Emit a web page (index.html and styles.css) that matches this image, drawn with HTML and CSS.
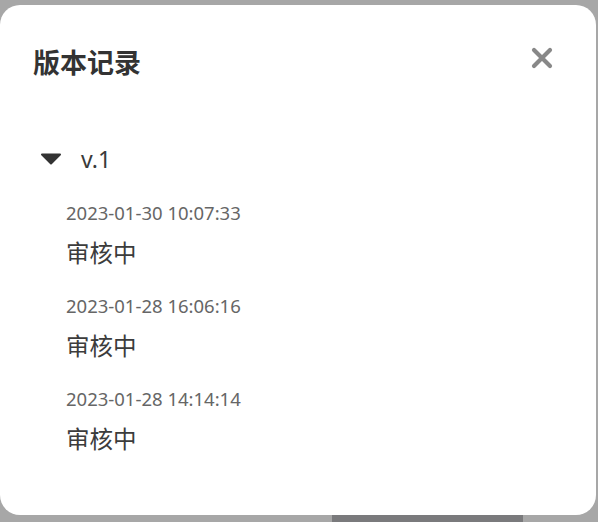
FILE: index.html
```html
<!DOCTYPE html>
<html lang="zh-CN">
<head>
<meta charset="utf-8">
<title>版本记录</title>
<link rel="stylesheet" href="styles.css">
</head>
<body>
<div class="page">
  <div class="dialog">
    <div class="header">
      <h2 class="title">版本记录</h2>
      <button class="close" aria-label="关闭">
        <svg width="22" height="22" viewBox="0 0 22 22"><path d="M3 3 L19 19 M19 3 L3 19" stroke="#888" stroke-width="4.2" stroke-linecap="round"/></svg>
      </button>
    </div>
    <div class="version">
      <div class="version-head">
        <svg class="caret" width="22" height="12" viewBox="0 0 22 12"><path d="M2 1.5 H20 L11 10.5 Z" fill="#333" stroke="#333" stroke-width="2" stroke-linejoin="round"/></svg>
        <span class="version-name">v.1</span>
      </div>
      <ul class="records">
        <li class="record"><div class="time">2023-01-30 10:07:33</div><div class="status">审核中</div></li>
        <li class="record"><div class="time">2023-01-28 16:06:16</div><div class="status">审核中</div></li>
        <li class="record"><div class="time">2023-01-28 14:14:14</div><div class="status">审核中</div></li>
      </ul>
    </div>
  </div>
  <div class="under"><div class="under-bar"></div></div>
</div>
</body>
</html>
```
FILE: styles.css
```css
html, body {
  margin: 0;
  padding: 0;
}
body {
  background: #a7a7a7;
  width: 598px;
  height: 522px;
  overflow: hidden;
  font-family: "Noto Sans", "Noto Sans CJK SC", sans-serif;
}
.page {
  padding-top: 5px;
}
.dialog {
  width: 596px;
  height: 510px;
  box-sizing: border-box;
  background: #fff;
  border-radius: 20px;
  padding: 0 33px 0 33px;
}
.header {
  display: flex;
  justify-content: space-between;
  align-items: center;
  padding-top: 38px;
  height: 38px;
}
.title {
  margin: 0;
  font-family: "Noto Sans CJK SC", sans-serif;
  font-size: 27px;
  font-weight: 700;
  color: #333;
  line-height: 38px;
}
.close {
  border: 0;
  background: none;
  padding: 0;
  margin-right: 10px;
  margin-top: -8px;
  width: 22px;
  height: 22px;
  display: flex;
}
.version {
  margin-top: 63px;
}
.version-head {
  display: flex;
  align-items: center;
  height: 30px;
}
.caret {
  margin-left: 7px;
  margin-right: 19px;
}
.version-name {
  font-size: 23px;
  font-weight: 400;
  color: #3a3a3a;
  line-height: 30px;
}
.records {
  list-style: none;
  margin: 0;
  padding: 14px 0 0 33px;
}
.record {
  padding-top: 13px;
  height: 80px;
}
.time {
  font-size: 18.5px;
  color: #666;
  line-height: 24px;
}
.status {
  font-family: "Noto Sans CJK SC", sans-serif;
  font-size: 23.5px;
  font-weight: 400;
  color: #3c3c3c;
  line-height: 32px;
  margin-top: 11px;
}
.under {
  padding-left: 332px;
}
.under-bar {
  width: 191px;
  height: 7px;
  background: #7a7a7c;
}
```
